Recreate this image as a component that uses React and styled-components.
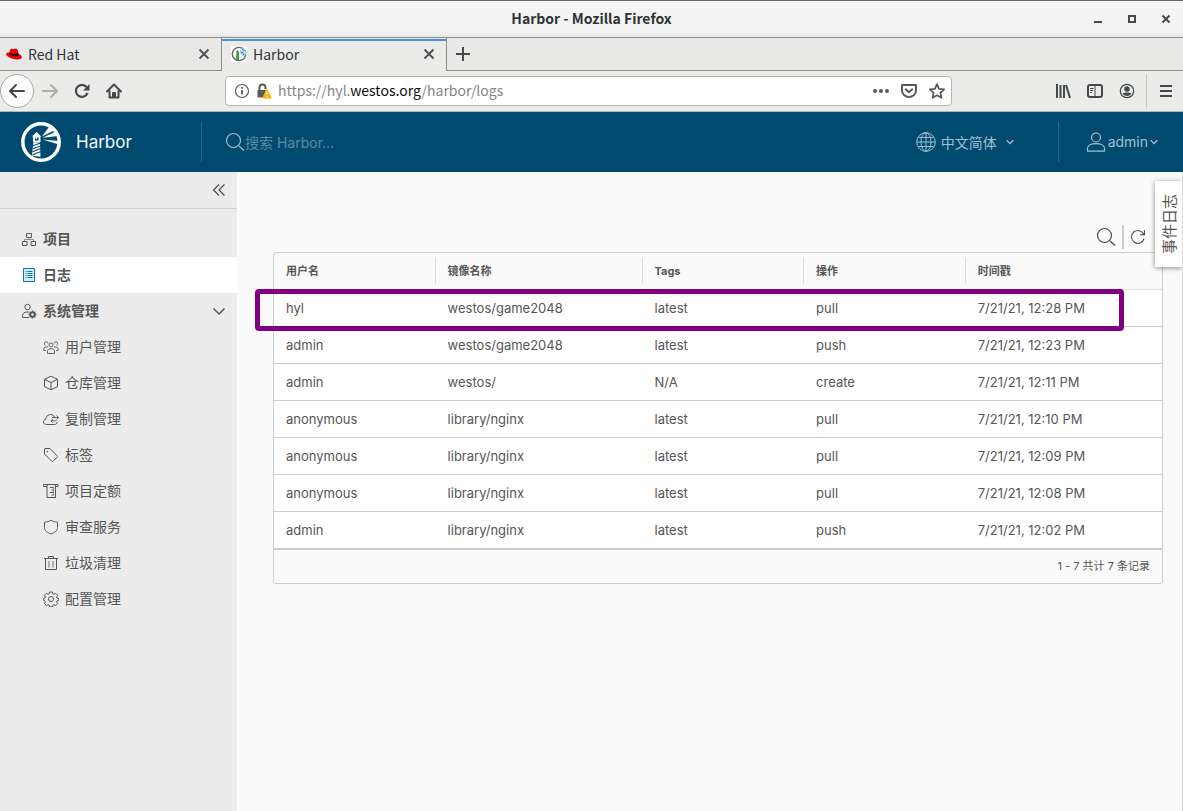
import React, { useState } from 'react';
import styled, { createGlobalStyle } from 'styled-components';

const GlobalStyle = createGlobalStyle`
  * {
    box-sizing: border-box;
  }

  body {
    margin: 0;
    background-color: #fafafa;
    color: #565656;
    font-family: Inter, "Noto Sans CJK SC", sans-serif;
    font-size: 14px;
  }

  button, select, input {
    font: inherit;
    color: inherit;
    border: none;
    background: none;
    padding: 0;
    margin: 0;
  }

  svg {
    display: block;
    flex: none;
  }
`;

const Page = styled.div`
  display: flex;
  flex-direction: column;
  min-height: 100vh;
`;

/* browser window */

const Chrome = styled.header`
  font-family: "Noto Sans CJK SC", sans-serif;
  color: #2e3436;
`;

const TitleBar = styled.div`
  display: grid;
  grid-template-columns: 1fr auto 1fr;
  align-items: center;
  height: 38px;
  background: linear-gradient(#f5f5f5, #f2f2f2 90%, #e2e2e2);
  border-top: 1px solid #6a6668;
  border-bottom: 1px solid #8e8e8c;
`;

const WindowTitle = styled.h1`
  grid-column: 2;
  margin: 0;
  padding-bottom: 2px;
  font-size: 14px;
  line-height: 20px;
  font-weight: 700;
`;

const WindowButtons = styled.div`
  display: flex;
  justify-content: flex-end;
`;

const ChromeButton = styled.button`
  display: flex;
  align-items: center;
  justify-content: center;
  width: ${({ $wide }) => ($wide ? '34px' : '32px')};
  height: 32px;
  color: ${({ $muted }) => ($muted ? '#adadab' : '#44494b')};
`;

const BackButton = styled(ChromeButton)`
  width: 34px;
  height: 34px;
  border: 1px solid #a9a9a7;
  border-radius: 50%;
  background-color: #fbfbfb;
`;

const TabStrip = styled.div`
  display: flex;
  height: 33px;
  background-color: #e8e8e6;
  border-bottom: 1px solid #8e8e8c;
`;

const Tab = styled.div`
  display: flex;
  align-items: center;
  width: ${({ $active }) => ($active ? '225px' : '222px')};
  height: ${({ $active }) => ($active ? '33px' : '32px')};
  padding: ${({ $active }) => ($active ? '0 8px 1px 9px' : '0 8px 0 6px')};
  border-right: 1px solid #8e8e8c;
  background-color: ${({ $active }) => ($active ? '#ebebe9' : 'transparent')};
  box-shadow: ${({ $active }) => ($active ? 'inset 0 1px #ebebe9, inset 0 3px #4a90d9' : 'none')};
`;

const TabTitle = styled.button`
  display: flex;
  flex: 1;
  align-items: center;
  gap: 6px;
  line-height: 20px;
`;

const TabClose = styled.button`
  padding: 2px;
  color: #4c5052;
`;

const NavBar = styled.nav`
  display: flex;
  align-items: center;
  height: 41px;
  background-color: #ebebe9;
  border-bottom: 1px solid #b4b4b0;
`;

const UrlBar = styled.div`
  display: flex;
  flex: 1;
  align-items: center;
  height: 30px;
  margin: 0 95px;
  padding: 0 6px 0 8px;
  gap: 12px;
  border: 1px solid #b6b6b3;
  border-radius: 4px;
  background-color: #fff;
  color: #5a5a5a;
`;

const SiteInfo = styled.div`
  display: flex;
  gap: 6px;
`;

const Url = styled.div`
  flex: 1;
  margin-left: -6px;
  padding-bottom: 2px;
  line-height: 20px;
  color: #858585;

  b {
    font-weight: 400;
    color: #0c0c0d;
  }
`;

const ToolDivider = styled.span`
  width: 1px;
  height: 34px;
  margin: 0 2px 0 3px;
  background-color: #c9c9c6;
`;

/* application header */

const AppHeader = styled.header`
  display: flex;
  align-items: center;
  height: 60px;
  background-color: #004a70;
  color: #a3bfce;
`;

const Brand = styled.a`
  display: flex;
  align-items: center;
  width: 201px;
  padding-left: 21px;
  gap: 15px;
  color: #f4f8fa;
  font-size: 17px;
  line-height: 24px;
  text-decoration: none;
`;

const HeaderDivider = styled.span`
  width: 1px;
  height: 40px;
  background-color: #2a6787;
`;

const SearchBox = styled.label`
  display: flex;
  flex: 1;
  align-items: center;
  padding-left: 23px;
`;

const SearchInput = styled.input`
  flex: 1;
  min-width: 0;
  height: 24px;
  outline: none;

  &::placeholder {
    color: #5b8aa4;
    opacity: 1;
  }
`;

const LanguagePicker = styled.label`
  display: flex;
  align-items: center;
  gap: 5px;
  margin-right: 44px;
`;

const LanguageSelect = styled.select`
  appearance: none;
  width: 60px;
  height: 24px;
  outline: none;
`;

const UserMenu = styled.button`
  display: flex;
  align-items: center;
  gap: 2px;
  padding: 0 25px 0 27px;
  line-height: 24px;
`;

/* side navigation */

const Body = styled.div`
  display: flex;
  flex: 1;
`;

const SideNav = styled.nav`
  width: 237px;
  flex: none;
  background-color: #ececec;
`;

const CollapseRow = styled.div`
  display: flex;
  align-items: center;
  justify-content: flex-end;
  height: 37px;
  padding-right: 10px;
  margin-bottom: 12px;
  border-bottom: 1px solid #cfcfcf;
`;

const NavList = styled.ul`
  list-style: none;
  margin: 0;
  padding: 0;
`;

const NavLink = styled.a`
  display: flex;
  align-items: center;
  gap: 6px;
  height: 36px;
  padding: 0 10px 0 ${({ $child }) => ($child ? '43px' : '21px')};
  font-weight: ${({ $child }) => ($child ? 400 : 700)};
  line-height: 20px;
  color: #565656;
  text-decoration: none;
  background-color: ${({ $active }) => ($active ? '#fff' : 'transparent')};

  > svg:first-child {
    color: ${({ $active }) => ($active ? '#0079b8' : '#565656')};
  }
`;

const NavText = styled.span`
  flex: 1;
`;

/* log list */

const Content = styled.main`
  display: flex;
  flex: 1;
  flex-direction: column;
  min-width: 0;
  padding: 52px 19px 24px 36px;
  border-right: 1px solid #dcdcdc;
`;

const Actions = styled.div`
  display: flex;
  align-items: center;
  justify-content: flex-end;
  gap: 6px;
  height: 28px;
  padding: 0 17px 2px 0;
`;

const ActionDivider = styled.span`
  width: 2px;
  height: 24px;
  background-color: #ccc;
`;

const IconButton = styled.button`
  display: flex;
  color: #4a4a4a;
`;

const GridFrame = styled.div`
  position: relative;
`;

const GridBox = styled.div`
  border: 1px solid #ccc;
  border-radius: 3px;
  overflow: hidden;
`;

const Table = styled.table`
  width: 100%;
  table-layout: fixed;
  border-collapse: collapse;
  font-size: 13px;
  line-height: 20px;
`;

const HeadCell = styled.th`
  width: ${({ $width }) => $width};
  height: 36px;
  padding: 5px 0;
  border-bottom: 1px solid #ddd;
  font-size: 11px;
  font-weight: 700;
  text-align: left;

  span {
    display: block;
    height: 26px;
    padding-left: 12px;
    line-height: 26px;
    border-right: 1px solid #ddd;
  }

  &:last-child span {
    border-right: none;
  }
`;

const Row = styled.tr`
  height: 37px;
  background-color: #fff;
  border-bottom: 1px solid #ccc;
`;

const Cell = styled.td`
  padding: 0 0 0 12px;
`;

const GridFooter = styled.footer`
  height: 34px;
  padding-right: 12px;
  border-top: 1px solid #ccc;
  font-size: 11px;
  line-height: 32px;
  text-align: right;
`;

const Highlight = styled.div`
  position: absolute;
  top: 37px;
  left: -18px;
  right: 39px;
  height: 42px;
  border: 5px solid #800080;
  border-radius: 4px;
  pointer-events: none;
`;

const EventLogTab = styled.button`
  position: absolute;
  top: 181px;
  right: 1px;
  width: 27px;
  height: 86px;
  padding-left: 3px;
  background-color: #fff;
  box-shadow: 0 1px 5px rgba(0, 0, 0, 0.45);
  clip-path: inset(-8px 0 -8px -8px);

  span {
    display: block;
    writing-mode: vertical-rl;
    text-orientation: sideways;
    transform: rotate(180deg);
    line-height: 24px;
    font-size: 15px;
  }
`;

const Svg = ({ size = 16, box = 16, children, ...rest }) => (
  <svg
    width={size}
    height={size}
    viewBox={`0 0 ${box} ${box}`}
    fill="none"
    stroke="currentColor"
    strokeWidth="1"
    aria-hidden="true"
    {...rest}
  >
    {children}
  </svg>
);

const CloseIcon = () => (
  <Svg size={14} box={14} strokeWidth="1.800"><path d="M2.500 2.500l9 9M11.500 2.500l-9 9" /></Svg>
);

const RedHatIcon = () => (
  <Svg stroke="none">
    <path fill="#e00" d="M4.200 3.600c.5-1 1.400-1.100 2.400-.7.8.3 1.200.1 2-.2 1.500-.5 2.800.3 3.200 1.900l.8 3.300c2 .5 3.300 1.700 3.300 3.200 0 1.800-2.200 2.700-5 2.400C6.800 13.100.2 10.800.1 8.200 0 7 1.300 6.400 3.400 6.500z" />
    <path fill="#200" d="M3.400 6.400l-.4 1.300c1.200 1.900 7 3.600 9.500 2.100l.1-1.900-.3-.9c-1.500 1.700-6.900.8-8.900-.6z" />
  </Svg>
);

const HarborFavicon = () => (
  <Svg stroke="none">
    <path fill="#fff" d="M0 0h16v16H0z" />
    <circle cx="8" cy="8" r="6.700" fill="#fff" stroke="#5b6264" strokeWidth="1.300" />
    <path fill="#3c9b3c" d="M5.500 6.500h2.500v7.500H5z" />
    <path fill="#3c6e46" d="M4.800 6.500L6.500 4 8.200 6.500z" />
    <path fill="#a9cff0" d="M8.500 6L12 1.500l3 3.500v3l-2 3-4.500-4z" />
    <path fill="#3f80bd" d="M10 6h2v1h-2zM12.500 4h1v1h-1zM12 8h1.500v1H12zM11 3h1v1h-1z" />
  </Svg>
);

const HarborLogo = () => (
  <Svg size={40} box={40} stroke="none" fill="#fff">
    <circle cx="20" cy="20" r="18.200" fill="none" stroke="#fff" strokeWidth="3.500" />
    <path d="M21 14.500L28 5l5 3.500zM21.500 15.800L35 9.500l2 4.500zM21.500 17.500L38 19v3.500zM10.800 14.500l4.900-4.500 4.500 4.500zM12 14h2v5.500h-2zM17.500 14h2v5.500h-2zM12 18.500h7.500v1.500h-7.500z" />
    <path d="M14.500 14h3v1.500h-1.500v1.500h-1.500z" />
    <path d="M12.400 20.300h6.600l.5 14.500-8.500-1z" />
    <path fill="none" stroke="#004a70" strokeWidth="1.200" d="M12 23.700l7.500-2.700M12 26.700l8-3M11.500 29.700l8.500-3.200M11.500 32.700l8.500-3.200" />
  </Svg>
);

const InfoIcon = () => (
  <Svg strokeWidth="1.200">
    <circle cx="8" cy="8" r="6.500" />
    <path strokeWidth="1.800" d="M8 7v4.500M8 4v1.800" />
  </Svg>
);

const LockWarningIcon = () => (
  <Svg stroke="none">
    <path fill="none" stroke="#5a5a5a" strokeWidth="2" d="M3.500 8V4.500a3 3 0 0 1 6 0V6" />
    <path fill="#5a5a5a" d="M1.500 7h8.500L7 14.500H1.500z" />
    <path fill="#ffb000" stroke="#ffb000" strokeLinejoin="round" d="M11 6.500l4.300 8.500H6.700z" />
    <path stroke="#fff" strokeWidth="1.300" d="M11 8.800v3M11 12.900v1.300" />
  </Svg>
);

const SearchIcon = ({ size = 20 }) => (
  <Svg size={size} box={20} strokeWidth="1.200">
    <circle cx="8.500" cy="8.500" r="7" />
    <path d="M14 14l5 4.500" />
  </Svg>
);

const ChevronDown = ({ size = 8 }) => (
  <Svg size={size} box={12} strokeWidth="2"><path d="M1 3.500l5 5 5-5" /></Svg>
);

const navIcons = {
  project: (
    <Svg>
      <path d="M5.500 2.500h5v4h-5zM1.500 10.500h4.500v4H1.500zM10 10.500h4.500v4H10z" />
      <path strokeOpacity=".6" d="M8 6.500v2M3.500 10.500v-2h9v2" />
    </Svg>
  ),
  log: (
    <Svg>
      <path fill="#d9ebf5" d="M2.500 1.500h11v13h-11z" />
      <path d="M4.500 4.500h1M6.500 4.500h5M4.500 6.500h1M6.500 6.500h5M4.500 8.500h1M6.500 8.500h5M4.500 10.500h1M6.500 10.500h5" />
    </Svg>
  ),
  admin: (
    <Svg>
      <circle cx="6.500" cy="4" r="2.700" />
      <path d="M8 9H6c-3 0-4.500 1.800-4.500 3.500v2H8" />
      <circle cx="11.500" cy="11.500" r="2.200" strokeWidth="1.800" />
      <path strokeWidth="1.500" d="M11.500 7.500v1.500M11.500 14v1.500M7.500 11.500H9M14 11.500h1.500M8.700 8.700l1 1M13.300 13.300l1 1M14.300 8.700l-1 1M9.700 13.300l-1 1" />
    </Svg>
  ),
  users: (
    <Svg strokeWidth=".9">
      <circle cx="8" cy="6" r="2" />
      <path d="M4.500 14.500v-2.500c0-3 7-3 7 0v2.500zM5 4.500a1.800 1.800 0 1 0-2.500 1.800M11 4.500a1.800 1.800 0 1 1 2.500 1.800M4.800 8C2.500 7.500.8 8.500.8 10v1.500H3M11.200 8c2.300-.5 4 .5 4 2v1.500H13" />
    </Svg>
  ),
  registry: (
    <Svg>
      <path d="M8 1.200l6.500 3v7.500L8 14.800l-6.500-3.100V4.200zM1.500 4.200L8 7.500l6.500-3.300M8 7.500v7.300" />
    </Svg>
  ),
  replication: (
    <Svg>
      <path d="M14 11c0 1.800-1 2.500-2.500 2.500H3.500C-.2 13.500-.5 9 2.800 8.300c0-4.800 6.700-6.600 8.700-2.300" />
      <path strokeWidth=".9" d="M9 6.500h6.500M13.500 4.500l2 2-2 2M13.500 9.800H8M10 7.800l-2 2 2 2" />
    </Svg>
  ),
  tag: (
    <Svg>
      <path strokeLinejoin="round" d="M1.500 2v5l7.300 7.300c.4.4.9.4 1.200 0l4.200-4.200c.4-.4.4-.9 0-1.200L7 1.500H2z" />
      <circle cx="4.300" cy="4.500" r=".8" fill="currentColor" stroke="none" />
    </Svg>
  ),
  quota: (
    <Svg>
      <path d="M13 3.500h2v-2H.5v2H4M4 1.500v13h8.500v-13" />
      <path d="M7 4.500h3.500M8.500 7h2M7 9.500h3.500M8.500 12h2" />
      <path strokeOpacity=".6" d="M10.500 4v8.500" />
    </Svg>
  ),
  shield: (
    <Svg><path strokeLinejoin="round" d="M8 1.200c2 1.300 4 1.800 6.500 2V8.500c0 3-2.500 5-6.500 6.500-4-1.500-6.500-3.500-6.500-6.500V3.200c2.500-.2 4.500-.7 6.500-2z" /></Svg>
  ),
  trash: (
    <Svg><path d="M1 3.500h14M5.500 3.500v-2h5v2M2.500 3.500v11h11v-11" /><path strokeOpacity=".8" d="M6 6v6.500M10 6v6.500" /></Svg>
  ),
  config: (
    <Svg>
      <circle cx="8" cy="8" r="2.500" />
      <path strokeLinejoin="round" d="M6.600 1h2.800l.5 1.900 1 .4 1.700-1 2 2-1 1.700.4 1 1.900.5v1.800l-1.900.6-.4 1 1 1.700-2 2-1.700-1-1 .4-.5 1.900H6.600l-.5-1.900-1-.4-1.700 1-2-2 1-1.700-.4-1L.5 9.300V7.500L2 7l.4-1-1-1.700 2-2 1.700 1 1-.4z" />
    </Svg>
  ),
};

const adminLinks = [
  { icon: 'users', label: '用户管理' },
  { icon: 'registry', label: '仓库管理' },
  { icon: 'replication', label: '复制管理' },
  { icon: 'tag', label: '标签' },
  { icon: 'quota', label: '项目定额' },
  { icon: 'shield', label: '审查服务' },
  { icon: 'trash', label: '垃圾清理' },
  { icon: 'config', label: '配置管理' },
];

const columns = [
  { label: '用户名', width: '18.2%' },
  { label: '镜像名称', width: '23.3%' },
  { label: 'Tags', width: '18.2%' },
  { label: '操作', width: '18.2%' },
  { label: '时间戳', width: 'auto' },
];

const logs = [
  ['hyl', 'westos/game2048', 'latest', 'pull', '7/21/21, 12:28 PM'],
  ['admin', 'westos/game2048', 'latest', 'push', '7/21/21, 12:23 PM'],
  ['admin', 'westos/', 'N/A', 'create', '7/21/21, 12:11 PM'],
  ['anonymous', 'library/nginx', 'latest', 'pull', '7/21/21, 12:10 PM'],
  ['anonymous', 'library/nginx', 'latest', 'pull', '7/21/21, 12:09 PM'],
  ['anonymous', 'library/nginx', 'latest', 'pull', '7/21/21, 12:08 PM'],
  ['admin', 'library/nginx', 'latest', 'push', '7/21/21, 12:02 PM'],
];

const BrowserChrome = () => (
  <Chrome>
    <TitleBar>
      <WindowTitle>Harbor - Mozilla Firefox</WindowTitle>
      <WindowButtons>
        <ChromeButton $wide aria-label="Minimize">
          <Svg strokeWidth="2"><path d="M4 11h8" /></Svg>
        </ChromeButton>
        <ChromeButton $wide aria-label="Maximize">
          <Svg strokeWidth="2"><path d="M5 5h6v6H5z" /></Svg>
        </ChromeButton>
        <ChromeButton $wide aria-label="Close window">
          <Svg strokeWidth="2"><path d="M4.500 4.500l7 7M11.500 4.500l-7 7" /></Svg>
        </ChromeButton>
      </WindowButtons>
    </TitleBar>
    <TabStrip>
      <Tab>
        <TabTitle><RedHatIcon />Red Hat</TabTitle>
        <TabClose aria-label="Close Red Hat"><CloseIcon /></TabClose>
      </Tab>
      <Tab $active>
        <TabTitle><HarborFavicon />Harbor</TabTitle>
        <TabClose aria-label="Close Harbor"><CloseIcon /></TabClose>
      </Tab>
      <ChromeButton aria-label="New tab">
        <Svg strokeWidth="2"><path d="M8 1v14M1 8h14" /></Svg>
      </ChromeButton>
    </TabStrip>
    <NavBar>
      <BackButton aria-label="Back">
        <Svg strokeWidth="2" strokeLinecap="round" strokeLinejoin="round"><path d="M15 8H1.500M7 2L1 8l6 6" /></Svg>
      </BackButton>
      <ChromeButton $muted aria-label="Forward">
        <Svg strokeWidth="2" strokeLinecap="round" strokeLinejoin="round"><path d="M1 8h13.500M9 2l6 6-6 6" /></Svg>
      </ChromeButton>
      <ChromeButton aria-label="Reload">
        <Svg strokeWidth="2.200">
          <path d="M13.500 10A6 6 0 1 1 12.500 4" />
          <path fill="currentColor" stroke="none" d="M15.500 1v6.500H9z" />
        </Svg>
      </ChromeButton>
      <ChromeButton aria-label="Home">
        <Svg strokeWidth="2" strokeLinejoin="round" strokeLinecap="round">
          <path d="M1 8.500L8 1.500l7 7M3.500 8v6.500h9V8M7 14.500V10h2v4.500" />
        </Svg>
      </ChromeButton>
      <UrlBar>
        <SiteInfo>
          <InfoIcon />
          <LockWarningIcon />
        </SiteInfo>
        <Url role="textbox" aria-label="Address">https://hyl.<b>westos.org</b>/harbor/logs</Url>
        <Svg fill="currentColor" stroke="none">
          <circle cx="2" cy="8" r="2" />
          <circle cx="8" cy="8" r="2" />
          <circle cx="14" cy="8" r="2" />
        </Svg>
        <Svg strokeWidth="2" strokeLinejoin="round">
          <path d="M1 2h14v5.500a7 6.500 0 0 1-14 0z" />
          <path strokeLinecap="round" d="M4.800 6.300L8 9.300l3.200-3" />
        </Svg>
        <Svg strokeWidth="1.800" strokeLinejoin="round">
          <path d="M8 1.200l2.100 4.600 5 .6-3.700 3.400 1 5L8 12.300l-4.400 2.500 1-5L.9 6.400l5-.6z" />
        </Svg>
      </UrlBar>
      <ChromeButton aria-label="Library">
        <Svg strokeWidth="2"><path d="M2 1v14M5.500 2v13M9 2v13M11 2l4 13" /></Svg>
      </ChromeButton>
      <ChromeButton aria-label="Sidebars">
        <Svg strokeWidth="2">
          <rect x="1" y="2" width="14" height="12" rx="2" />
          <path strokeWidth="1" d="M8 2v12M3 5.500h3.500M3 7.500h3M3 9.500h2" />
        </Svg>
      </ChromeButton>
      <ChromeButton aria-label="Account">
        <Svg strokeWidth="1.200">
          <circle cx="8" cy="8" r="6.700" />
          <circle cx="8" cy="6" r="2.700" fill="currentColor" stroke="none" />
          <path fill="currentColor" stroke="none" d="M3.500 10c1.500.3 2 0 3-.5h3c1 .5 1.500.8 3 .5-1 2-2.500 3-4.500 3s-3.500-1-4.500-3z" />
        </Svg>
      </ChromeButton>
      <ToolDivider />
      <ChromeButton $wide aria-label="Open menu">
        <Svg strokeWidth="2"><path d="M2 3h12M2 8h12M2 13h12" /></Svg>
      </ChromeButton>
    </NavBar>
  </Chrome>
);

const LogTable = () => (
  <GridFrame>
    <GridBox>
      <Table>
        <thead>
          <tr>
            {columns.map((col) => (
              <HeadCell key={col.label} $width={col.width}><span>{col.label}</span></HeadCell>
            ))}
          </tr>
        </thead>
        <tbody>
          {logs.map((log) => (
            <Row key={log[4]}>
              {log.map((value, i) => <Cell key={columns[i].label}>{value}</Cell>)}
            </Row>
          ))}
        </tbody>
      </Table>
      <GridFooter>1 - 7 共计 7 条记录</GridFooter>
    </GridBox>
    <Highlight />
  </GridFrame>
);

const App = () => {
  const [query, setQuery] = useState('');
  const [language, setLanguage] = useState('zh-cn');
  const [adminOpen, setAdminOpen] = useState(true);

  return (
    <Page>
      <GlobalStyle />
      <BrowserChrome />
      <AppHeader>
        <Brand href="#home"><HarborLogo />Harbor</Brand>
        <HeaderDivider />
        <SearchBox>
          <SearchIcon />
          <SearchInput
            type="text"
            aria-label="搜索"
            placeholder="搜索 Harbor..."
            value={query}
            onChange={(e) => setQuery(e.target.value)}
          />
        </SearchBox>
        <LanguagePicker>
          <Svg size={20} box={20}>
            <circle cx="10" cy="10" r="9.300" />
            <ellipse cx="10" cy="10" rx="5" ry="9.300" />
            <path d="M10 1v18M1 10h18M2.500 5.500h15M2.500 14.500h15" />
          </Svg>
          <LanguageSelect
            aria-label="语言"
            value={language}
            onChange={(e) => setLanguage(e.target.value)}
          >
            <option value="zh-cn">中文简体</option>
            <option value="en-us">English</option>
          </LanguageSelect>
          <ChevronDown />
        </LanguagePicker>
        <HeaderDivider />
        <UserMenu aria-haspopup="menu">
          <Svg size={20} box={20} strokeWidth="1.200">
            <circle cx="10" cy="5.500" r="4.500" />
            <path strokeLinejoin="round" d="M1.500 19.200v-3c0-6 17-6 17 0v3z" />
          </Svg>
          admin
          <ChevronDown />
        </UserMenu>
      </AppHeader>
      <Body>
        <SideNav>
          <CollapseRow>
            <IconButton aria-label="收起">
              <Svg strokeWidth="1.200"><path d="M8 2.500L2.500 8 8 13.500M13.500 2.500L8 8l5.500 5.500" /></Svg>
            </IconButton>
          </CollapseRow>
          <NavList>
            <li><NavLink href="#projects">{navIcons.project}<NavText>项目</NavText></NavLink></li>
            <li><NavLink $active href="#logs">{navIcons.log}<NavText>日志</NavText></NavLink></li>
            <li>
              <NavLink href="#admin" onClick={() => setAdminOpen(!adminOpen)}>
                {navIcons.admin}
                <NavText>系统管理</NavText>
                <Svg strokeWidth="1.500"><path d="M2.500 5.500L8 11l5.500-5.500" /></Svg>
              </NavLink>
              {adminOpen && (
                <NavList>
                  {adminLinks.map((link) => (
                    <li key={link.icon}>
                      <NavLink $child href={`#${link.icon}`}>
                        {navIcons[link.icon]}
                        <NavText>{link.label}</NavText>
                      </NavLink>
                    </li>
                  ))}
                </NavList>
              )}
            </li>
          </NavList>
        </SideNav>
        <Content>
          <Actions>
            <IconButton aria-label="搜索日志"><SearchIcon /></IconButton>
            <ActionDivider />
            <IconButton aria-label="刷新">
              <Svg box={18} strokeWidth="1.200">
                <path d="M15.800 11A7.200 7.200 0 1 1 15.500 6M16.300 1.500V6.500h-5" />
              </Svg>
            </IconButton>
          </Actions>
          <LogTable />
        </Content>
      </Body>
      <EventLogTab><span>事件日志</span></EventLogTab>
    </Page>
  );
};

export default App;
